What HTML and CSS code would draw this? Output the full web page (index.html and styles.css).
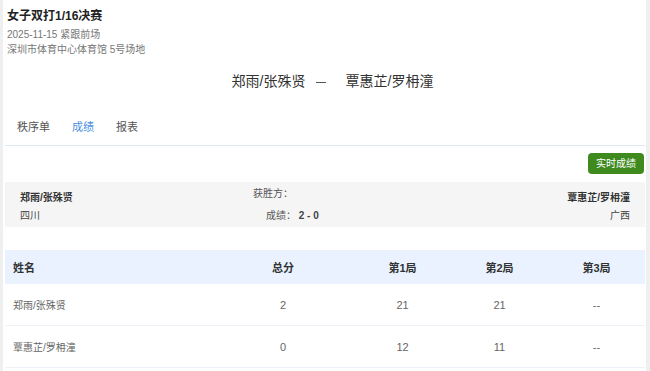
FILE: index.html
```html
<!DOCTYPE html>
<html lang="zh-CN">
<head>
	<meta charset="UTF-8">
	<title>成绩</title>
	<link rel="stylesheet" href="styles.css">
</head>
<body>
	<div class="page">
		<div class="head">
			<h1 class="title">女子双打1/16决赛</h1>
			<p class="info">2025-11-15 紧跟前场</p>
			<p class="info">深圳市体育中心体育馆 5号场地</p>
		</div>

		<div class="match">郑雨/张殊贤<span class="dash"></span>覃惠芷/罗枏潼</div>

		<ul class="tabs">
			<li>秩序单</li>
			<li class="active">成绩</li>
			<li>报表</li>
		</ul>

		<div class="tools">
			<a class="btn">实时成绩</a>
		</div>

		<div class="result">
			<div class="side">
				<p class="name">郑雨/张殊贤</p>
				<p>四川</p>
			</div>
			<div class="mid">
				<p>获胜方：</p>
				<p class="score">成绩： <b>2 - 0</b></p>
			</div>
			<div class="side right">
				<p class="name">覃惠芷/罗枏潼</p>
				<p>广西</p>
			</div>
		</div>

		<table class="grid">
			<tr>
				<th class="first">姓名</th>
				<th>总分</th>
				<th>第1局</th>
				<th>第2局</th>
				<th>第3局</th>
			</tr>
			<tr>
				<td class="first">郑雨/张殊贤</td>
				<td>2</td>
				<td>21</td>
				<td>21</td>
				<td>--</td>
			</tr>
			<tr>
				<td class="first">覃惠芷/罗枏潼</td>
				<td>0</td>
				<td>12</td>
				<td>11</td>
				<td>--</td>
			</tr>
		</table>
	</div>
</body>
</html>
```

FILE: styles.css
```css
*{
	margin: 0;
	padding: 0;
}
body{
	background: #efefef;
	font-family: "Liberation Sans", "Noto Sans CJK SC", sans-serif;
	color: #333;
}
.page{
	background: #fff;
	margin: 0 4px 0 3px;
	padding: 0 1px 0 2px;
	height: 371px;
	overflow: hidden;
}
.head{
	padding: 8px 0 0 2px;
}
.title{
	font-size: 12px;
	line-height: 16px;
	font-weight: bold;
	color: #222;
}
.info{
	font-size: 10px;
	line-height: 15px;
	color: #777;
}
.head .info:nth-child(2){
	margin-top: 3px;
}
.match{
	margin-top: 14px;
	text-align: center;
	font-size: 14px;
	line-height: 20px;
	color: #333;
	padding-left: 15px;
}
.dash{
	display: inline-block;
	width: 10px;
	height: 1px;
	background: #555;
	vertical-align: middle;
	margin: 0 20px 0 10px;
}
.tabs{
	list-style: none;
	display: flex;
	gap: 22px;
	padding: 29px 12px 10px;
	border-bottom: 1px solid #dde7f5;
	font-size: 11px;
	line-height: 15px;
	color: #555;
}
.tabs .active{
	color: #4a8fe3;
}
.tools{
	display: flex;
	justify-content: flex-end;
	padding: 7px 1px 0 0;
}
.btn{
	display: block;
	background: #3e8a1f;
	color: #fff;
	font-size: 10px;
	line-height: 21px;
	padding: 0 8px;
	border-radius: 4px;
}
.result{
	margin-top: 8px;
	background: #f5f5f5;
	display: grid;
	grid-template-columns: 233px auto 1fr;
	padding: 7px 15px 2px;
	font-size: 10px;
	line-height: 18px;
	color: #444;
}
.result .name{
	font-weight: bold;
	color: #333;
}
.mid{
	color: #555;
}
.mid p:first-child{
	margin-top: -4px;
}
.mid .score{
	padding-left: 13px;
	margin-top: 4px;
}
.mid b{
	font-weight: bold;
	color: #444;
}
.right{
	text-align: right;
}
.grid{
	margin-top: 23px;
	width: 100%;
	border-collapse: collapse;
	font-size: 11px;
}
.grid th{
	background: #e9f2fe;
	height: 34px;
	font-size: 11px;
	font-weight: bold;
	color: #333;
	text-align: center;
}
.grid td{
	height: 41px;
	border-bottom: 1px solid #eef3fa;
	text-align: center;
	color: #666;
}
.grid td.first{
	font-size: 10px;
}
.grid .first{
	text-align: left;
	padding-left: 8px;
	width: 199px;
}
.grid th:nth-child(2){
	width: 142px;
}
.grid th:nth-child(3),
.grid th:nth-child(4){
	width: 97px;
}
```
